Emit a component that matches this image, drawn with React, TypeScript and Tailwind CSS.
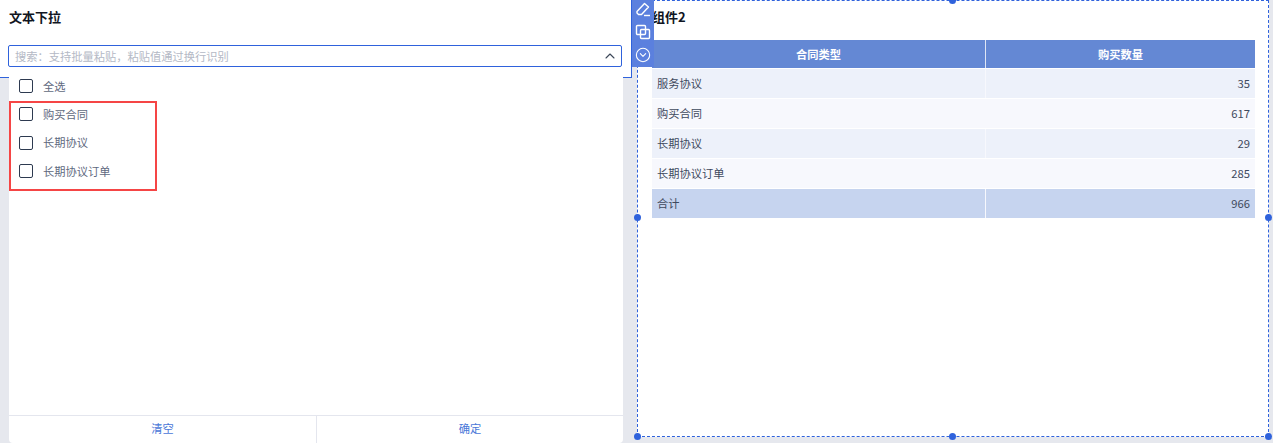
import React from 'react';
import { ChevronUp, CircleChevronDown } from 'lucide-react';

const options = ['全选', '购买合同', '长期协议', '长期协议订单'];

const rows = [
  { name: '服务协议', count: 35, bg: 'bg-[#edf1fa]' },
  { name: '购买合同', count: 617, bg: 'bg-[#f7f8fd]' },
  { name: '长期协议', count: 29, bg: 'bg-[#edf1fa]' },
  { name: '长期协议订单', count: 285, bg: 'bg-[#f7f8fd]' },
  { name: '合计', count: 966, bg: 'bg-[#c6d4ef]' },
];

const Handle = ({ className }: { className: string }) => (
  <span className={`absolute w-[7px] h-[7px] rounded-full bg-[#2f62dc] ${className}`} />
);

const Dropdown = () => (
  <div className="absolute left-[9px] top-[67px] w-[614px] h-[376px] bg-white rounded-b flex flex-col">
    <div className="relative flex-1 flex flex-col pt-[5px]">
      {options.map((label) => (
        <div key={label} className="flex items-center h-[28.3px] pl-[10px] gap-[10px]">
          <span className="w-[14px] h-[14px] rounded-[2px] border border-[#2d3a50] bg-white" />
          <span className="text-[11.25px] text-[#5f6a80]">{label}</span>
        </div>
      ))}
      <div className="absolute left-0 top-[34px] w-[148px] h-[90px] border-2 border-[#f54545]" />
    </div>
    <div className="h-[28px] border-t border-[#e4e6ee] flex text-[11.25px] text-[#4a77d8] pb-[2px]">
      <div className="w-[308px] border-r border-[#e4e6ee] -mb-[2px] pb-[2px] flex items-center justify-center">清空</div>
      <div className="flex-1 flex items-center justify-center">确定</div>
    </div>
  </div>
);

const Toolbar = () => (
  <div className="absolute left-[632px] top-0 w-[22px] h-[67px] bg-[#5b80de] flex flex-col items-center text-white pt-[1px] gap-[7px]">
    <svg width="16" height="16" viewBox="0 0 16 16" fill="none" stroke="currentColor" strokeWidth="1.4" strokeLinejoin="round">
      <path d="M2 10.5 9.5 2.5 13.5 6 6.5 13.5H3.5L2 12Z" />
      <path d="M9 14.5H15" />
    </svg>
    <svg width="16" height="16" viewBox="0 0 16 16" fill="none" stroke="currentColor" strokeWidth="1.4">
      <rect x="1.5" y="1.5" width="9" height="9" rx="1" />
      <rect x="5.5" y="5.5" width="9" height="9" rx="1" />
    </svg>
    <CircleChevronDown size={16} strokeWidth={1.6} />
  </div>
);

const App = () => {
  return (
    <div
      className="relative w-[1273px] h-[443px] overflow-hidden bg-[#e6e8ee] flex items-start"
      style={{ fontFamily: '"Noto Sans CJK SC", "Noto Sans", sans-serif' }}
    >
      <div className="w-[632px] h-[78px] bg-white border-r border-b border-[#2f62dc] pl-[8px] pt-[8px] shrink-0">
        <div className="text-[13px] leading-[18px] font-bold text-[#101522] pl-px">文本下拉</div>
        <div className="mt-[19px] w-[614px] h-[22px] border border-[#2f62dc] rounded-[2px] bg-white flex items-center justify-between pl-[6px] pr-[3px]">
          <span className="text-[11.25px] text-[#b4b9c5]">搜索：支持批量粘贴，粘贴值通过换行识别</span>
          <ChevronUp size={16} strokeWidth={1.6} className="text-[#3b4658]" />
        </div>
      </div>

      <div className="relative ml-[5px] w-[632px] h-[437px] bg-white border border-dashed border-[#2f62dc] pl-[14px] pr-[13px] pt-[7px]">
        <div className="text-[13px] leading-[18px] font-bold text-[#101522]">组件2</div>
        <div className="mt-[14px] flex flex-col text-[11.25px] text-[#3f4a5e] gap-px">
          <div className="flex h-[28px] bg-[#6488d4] font-bold text-white">
            <div className="w-[334px] flex items-center justify-center border-r border-[#dfe6f5]">合同类型</div>
            <div className="flex-1 flex items-center justify-center">购买数量</div>
          </div>
          {rows.map((row) => (
            <div key={row.name} className={`flex h-[29px] ${row.bg}`}>
              <div className="w-[334px] flex items-center px-[5px] border-r border-[#f7f8fd]">{row.name}</div>
              <div className="flex-1 flex items-center justify-end px-[5px]">{row.count}</div>
            </div>
          ))}
        </div>
        <Handle className="left-[-4px] top-[213px]" />
        <Handle className="right-[-4px] top-[213px]" />
        <Handle className="left-[311px] top-[-4px]" />
        <Handle className="left-[311px] bottom-[-4px]" />
        <Handle className="left-[-4px] bottom-[-4px]" />
        <Handle className="right-[-4px] bottom-[-4px]" />
      </div>

      <Dropdown />
      <Toolbar />
    </div>
  );
};

export default App;
